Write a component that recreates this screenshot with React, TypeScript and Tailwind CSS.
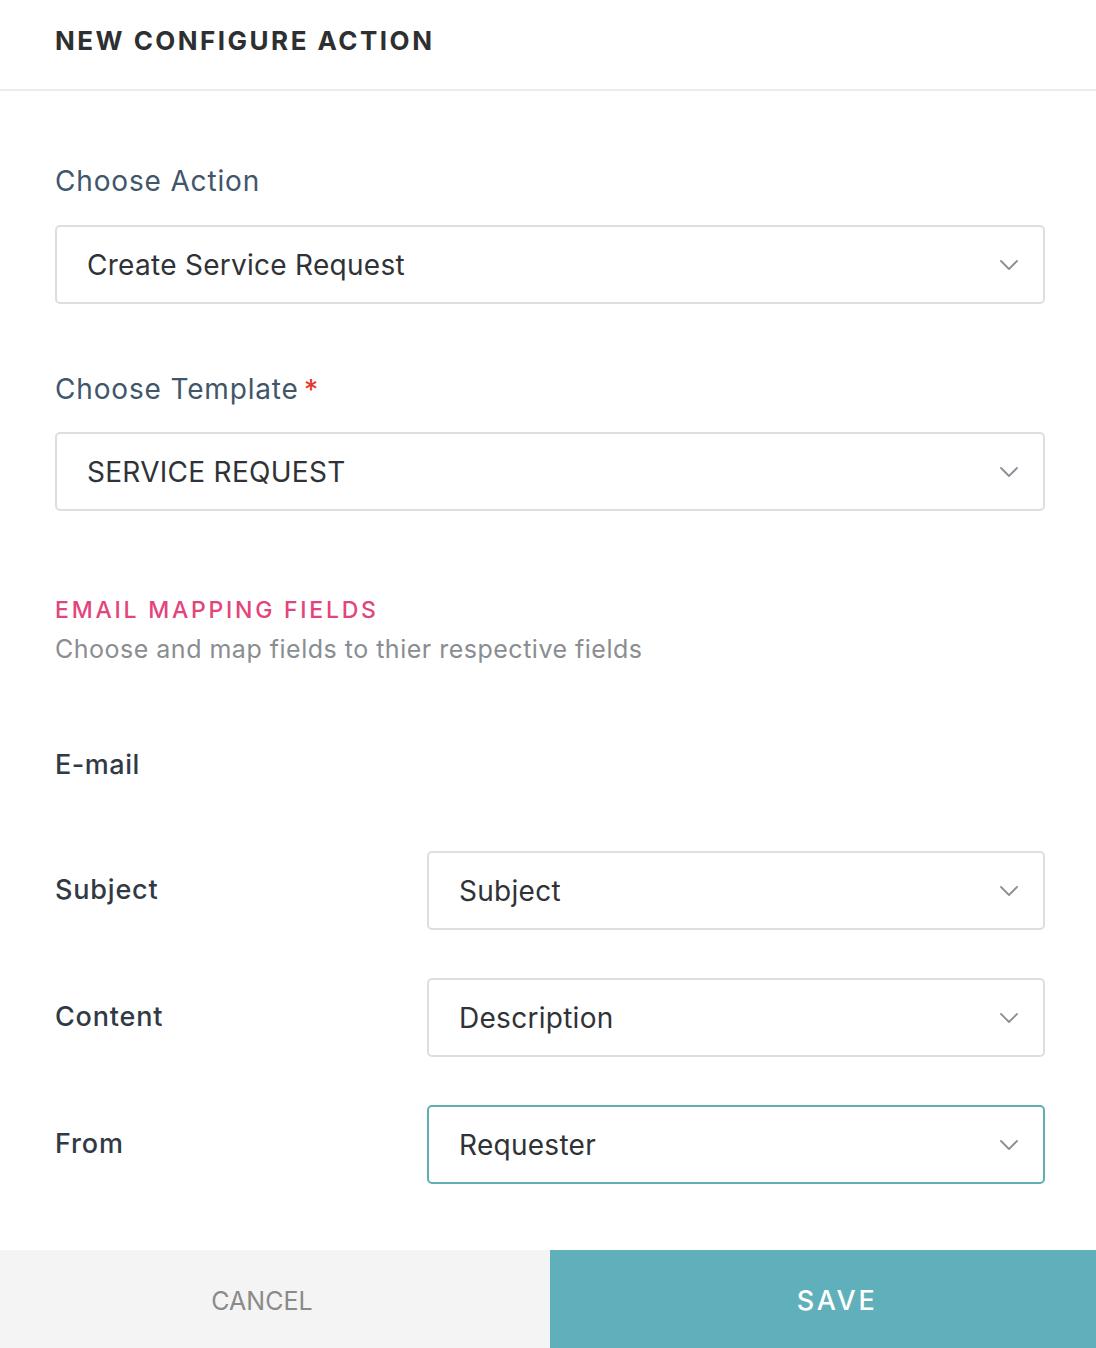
import React from "react";

const Chevron = () => (
  <svg width="20" height="12" viewBox="0 0 20 12" fill="none" className="shrink-0">
    <path d="M2 2 L10 10 L18 2" stroke="#8a9099" strokeWidth="1.8" strokeLinecap="round" strokeLinejoin="round" />
  </svg>
);

const Select = ({ value, active = false, className = "" }: { value: string; active?: boolean; className?: string }) => (
  <div
    className={`h-[79px] rounded-[5px] border-2 ${active ? "border-[#5fafb3]" : "border-[#dedede]"} bg-white flex items-center justify-between pl-[30px] pr-[24px] ${className}`}
  >
    <span className="text-[28px] text-[#2f3337] tracking-[0.01em]">{value}</span>
    <Chevron />
  </div>
);

export default function App() {
  return (
    <div className="w-[1096px] h-[1348px] bg-white flex flex-col" style={{ fontFamily: "Inter, 'Noto Sans', sans-serif" }}>
      <div className="h-[91px] shrink-0 border-b-2 border-[#ececec] flex items-center pl-[55px] pb-[8px]">
        <h1 className="text-[26px] font-bold tracking-[0.095em] text-[#2e2f31] leading-none">NEW CONFIGURE ACTION</h1>
      </div>

      <div className="flex-1 flex flex-col px-[55px] pr-[51px]">
        <div className="mt-[73px] text-[28px] leading-[34px] text-[#41566a] tracking-[0.03em]">Choose Action</div>
        <Select value="Create Service Request" className="mt-[27px]" />

        <div className="mt-[68px] text-[28px] leading-[34px] text-[#41566a] tracking-[0.03em] flex items-start">
          Choose Template<span className="text-[#e5392f] ml-[5px] mt-[4px] text-[28px] leading-[28px] font-medium">*</span>
        </div>
        <Select value="SERVICE REQUEST" className="mt-[26px]" />

        <div className="mt-[84px] text-[23px] leading-[30px] font-medium text-[#e2457c] tracking-[0.12em]">EMAIL MAPPING FIELDS</div>
        <div className="mt-[8px] text-[25px] leading-[32px] text-[#8a8d91] tracking-[0.02em]">Choose and map fields to thier respective fields</div>

        <div className="mt-[83px] text-[27px] leading-[34px] font-medium text-[#313a44] tracking-[0.02em]">E-mail</div>

        <div className="mt-[69px] flex flex-col gap-[48px]">
          {[
            { label: "Subject", value: "Subject" },
            { label: "Content", value: "Description" },
            { label: "From", value: "Requester", active: true },
          ].map((r) => (
            <div key={r.label} className="flex items-center">
              <div className="w-[372px] text-[27px] font-[550] text-[#313a44] tracking-[0.03em]">{r.label}</div>
              <Select value={r.value} active={r.active} className="flex-1" />
            </div>
          ))}
        </div>
      </div>

      <div className="h-[98px] shrink-0 flex">
        <button className="w-[550px] bg-[#f4f4f4] flex items-center justify-center pr-[26px] pt-[6px] text-[25px] text-[#8a8a8a]">CANCEL</button>
        <button className="flex-1 bg-[#5fb0bb] flex items-center justify-center pl-[28px] pt-[4px] text-[27px] text-white font-medium tracking-[0.1em]">SAVE</button>
      </div>
    </div>
  );
}
